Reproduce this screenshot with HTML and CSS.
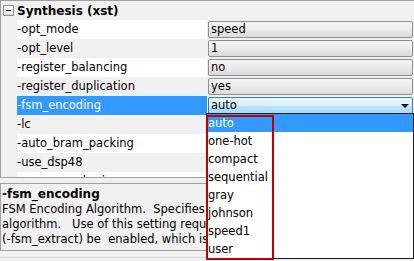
FILE: index.html
```html
<!DOCTYPE html>
<html lang="en">
<head>
    <meta charset="UTF-8">
    <title>Synthesis Properties</title>
    <link rel="stylesheet" href="styles.css">
</head>
<body>
    <div class="panel">
        <div class="grid">
            <div class="category">
                <span class="toggle"></span>
                <span class="category-title">Synthesis (xst)</span>
            </div>
            <div class="row">
                <div class="name">-opt_mode</div>
                <div class="value"><div class="box">speed</div></div>
            </div>
            <div class="row alt">
                <div class="name">-opt_level</div>
                <div class="value"><div class="box">1</div></div>
            </div>
            <div class="row">
                <div class="name">-register_balancing</div>
                <div class="value"><div class="box">no</div></div>
            </div>
            <div class="row alt">
                <div class="name">-register_duplication</div>
                <div class="value"><div class="box">yes</div></div>
            </div>
            <div class="row selected">
                <div class="name">-fsm_encoding</div>
                <div class="value"><div class="box combo">auto<span class="arrow"></span></div></div>
            </div>
            <div class="row alt">
                <div class="name">-lc</div>
                <div class="value"><div class="box">auto</div></div>
            </div>
            <div class="row">
                <div class="name">-auto_bram_packing</div>
                <div class="value"><div class="box">no</div></div>
            </div>
            <div class="row alt">
                <div class="name">-use_dsp48</div>
                <div class="value"><div class="box">auto</div></div>
            </div>
            <div class="row">
                <div class="name">-resource_sharing</div>
                <div class="value"><div class="box">yes</div></div>
            </div>
        </div>

        <div class="desc">
            <div class="desc-title">-fsm_encoding</div>
            <div class="desc-line">FSM Encoding Algorithm.  Specifies the FSM encoding</div>
            <div class="desc-line">algorithm.   Use of this setting requires that FSM Extraction</div>
            <div class="desc-line">(-fsm_extract) be  enabled, which is the default.</div>
        </div>
        <div class="foot"></div>

        <!-- open drop-down of the selected property -->
        <ul class="dropdown">
            <li class="current">auto</li>
            <li>one-hot</li>
            <li>compact</li>
            <li>sequential</li>
            <li>gray</li>
            <li>johnson</li>
            <li>speed1</li>
            <li>user</li>
        </ul>
        <div class="callout"></div>
    </div>
</body>
</html>
```

FILE: styles.css
```css
body {
    margin: 0;
    font-family: "DejaVu Sans", sans-serif;
    font-size: 11.5px;
    color: #000;
    background: #f0f0f0;
}
.panel {
    position: relative;
    width: 414px;
    height: 261px;
    overflow: hidden;
    background: #f0f0f0;
}
.grid {
    height: 176px;
    overflow: hidden;
    border-top: 1px solid #a0a0a0;
    border-left: 1px solid #a0a0a0;
    border-bottom: 1px solid #a0a0a0;
    padding-left: 16px;
}
.category {
    display: flex;
    align-items: center;
    height: 19px;
    margin-left: -16px;
}
.toggle {
    position: relative;
    box-sizing: border-box;
    width: 11px;
    height: 11px;
    margin: 0 3px 0 2px;
    border: 1px solid #8f8f8f;
    background: linear-gradient(#ffffff, #e4e4e4);
}
.toggle::after {
    content: "";
    position: absolute;
    left: 2px;
    top: 4px;
    width: 5px;
    height: 1px;
    background: #1e1e1e;
}
.category-title {
    font-weight: bold;
    font-size: 12px;
}
.row {
    display: flex;
    height: 19px;
    line-height: 19px;
}
.name {
    width: 190px;
    background: #fff;
    white-space: nowrap;
    overflow: hidden;
}
.row.alt .name {
    background: #f0f0f0;
}
.row.selected .name {
    background: #3399ff;
    color: #fff;
}
.value {
    flex: 1;
    padding: 1px;
}
.box {
    position: relative;
    box-sizing: border-box;
    height: 17px;
    line-height: 15px;
    padding-left: 2px;
    border: 1px solid #8e8f8f;
    border-radius: 2px;
    background: linear-gradient(#f4f4f4 0%, #ebebeb 50%, #dadada 100%);
}
.box.combo {
    border-color: #3c7fb1;
    background: linear-gradient(#eaf6fd 0%, #d9f0fc 50%, #bee6fd 51%, #a7d9f5 100%);
}
.arrow {
    position: absolute;
    right: 3px;
    top: 6px;
    width: 0;
    height: 0;
    border-left: 4px solid transparent;
    border-right: 4px solid transparent;
    border-top: 4px solid #000;
}
.desc {
    box-sizing: border-box;
    height: 68px;
    margin-top: 5px;
    padding: 3px 0 0 1px;
    border: 1px solid #a0a0a0;
    overflow: hidden;
}
.desc-title {
    font-weight: bold;
    font-size: 12px;
    line-height: 15px;
}
.desc-line {
    white-space: pre;
    line-height: 15px;
}
.foot {
    height: 5px;
    margin-top: 1px;
    border-bottom: 1px solid #d5d5d5;
}
.dropdown {
    position: absolute;
    left: 206px;
    top: 113px;
    width: 206px;
    margin: 0;
    padding: 0;
    list-style: none;
    background: #fff;
    border: 1px solid #1a1a1a;
}
.dropdown li {
    height: 18px;
    line-height: 18px;
    padding-left: 1px;
}
.dropdown li.current {
    background: #3399ff;
    color: #fff;
}
.callout {
    position: absolute;
    left: 206px;
    top: 115px;
    width: 64px;
    height: 141px;
    border: 2px solid #c00000;
}
```
